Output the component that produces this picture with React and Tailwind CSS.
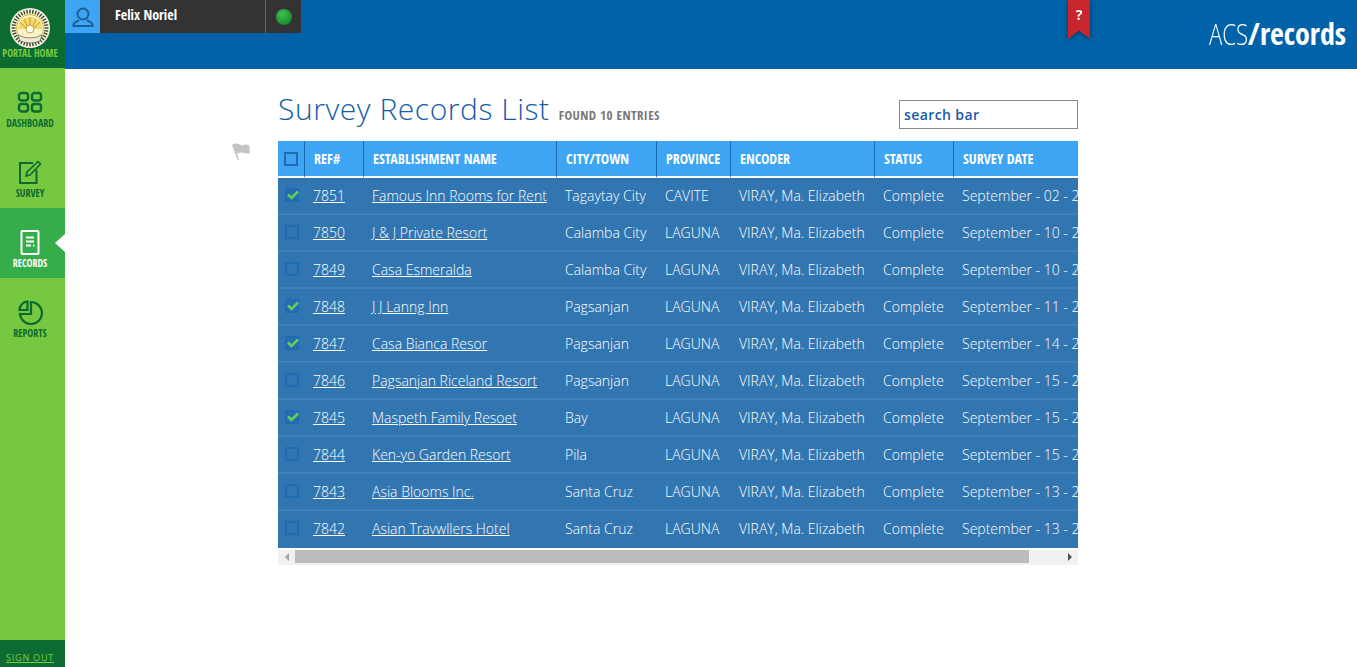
const rows = [
  ["7851", "Famous Inn Rooms for Rent", "Tagaytay City", "CAVITE", "September - 02 - 2015", true],
  ["7850", "J & J Private Resort", "Calamba City", "LAGUNA", "September - 10 - 2015", false],
  ["7849", "Casa Esmeralda", "Calamba City", "LAGUNA", "September - 10 - 2015", false],
  ["7848", "J J Lanng Inn", "Pagsanjan", "LAGUNA", "September - 11 - 2015", true],
  ["7847", "Casa Bianca Resor", "Pagsanjan", "LAGUNA", "September - 14 - 2015", true],
  ["7846", "Pagsanjan Riceland Resort", "Pagsanjan", "LAGUNA", "September - 15 - 2015", false],
  ["7845", "Maspeth Family Resoet", "Bay", "LAGUNA", "September - 15 - 2015", true],
  ["7844", "Ken-yo Garden Resort", "Pila", "LAGUNA", "September - 15 - 2015", false],
  ["7843", "Asia Blooms Inc.", "Santa Cruz", "LAGUNA", "September - 13 - 2015", false],
  ["7842", "Asian Travwllers Hotel", "Santa Cruz", "LAGUNA", "September - 13 - 2015", false],
];

const narrow = "font-['Open_Sans_Condensed','Liberation_Sans_Narrow','Liberation_Sans',sans-serif]";

function Seal() {
  const ticks = Array.from({ length: 36 }, (_, i) => i * 10);
  return (
    <svg width="40" height="40" viewBox="0 0 40 40">
      <circle cx="20" cy="20" r="20" fill="#f6f3dc" />
      {ticks.map((a) => (
        <line key={a} x1="20" y1="1.5" x2="20" y2="5.5" stroke="#2f3a1e" strokeWidth="1.3" transform={`rotate(${a} 20 20)`} />
      ))}
      <circle cx="20" cy="20" r="13.5" fill="#fbf4c8" stroke="#d9b640" strokeWidth="1" />
      <path d="M8 21 A12 12 0 0 1 32 21 Z" fill="#f4d96b" />
      <path d="M20 24 L10 14 M20 24 L14 11 M20 24 L20 9 M20 24 L26 11 M20 24 L30 14" stroke="#c99b2a" strokeWidth="1" />
      <circle cx="20" cy="21" r="4" fill="#fffbe8" stroke="#b98f2c" strokeWidth="0.8" />
      <path d="M8 27 Q20 33 32 27 L30 33 Q20 37 10 33 Z" fill="#efe9cf" stroke="#444" strokeWidth="0.6" />
    </svg>
  );
}

function NavItem({ label, active, children }) {
  return (
    <div className={`relative h-[70px] flex flex-col items-center pt-[21px] pr-[5px] ${active ? "bg-[#35ad4b] text-white" : "text-[#0a6a30]"}`}>
      <div className="h-[27px] flex items-center justify-center">{children}</div>
      <div className={`${narrow} mt-[1px] text-[10px] leading-[12px] font-bold`}>{label}</div>
      {active && (
        <div className="absolute right-0 top-[26px] w-0 h-0 border-y-[9px] border-y-transparent border-r-[10px] border-r-white" />
      )}
    </div>
  );
}

function Box({ checked }) {
  return (
    <div className={`relative w-[14px] h-[14px] border-2 border-[#1f6cb5] ${checked ? "bg-[#2a6cb0]" : ""}`}>
      {checked && (
        <svg className="absolute -left-[1px] -top-[2px]" width="14" height="14" viewBox="0 0 14 14">
          <path d="M2 6.500 L5.500 10 L12 3.500" fill="none" stroke="#5fcf5a" strokeWidth="2.600" />
        </svg>
      )}
    </div>
  );
}

const heads = [
  ["REF#", "w-[59px]"],
  ["ESTABLISHMENT NAME", "w-[193px]"],
  ["CITY/TOWN", "w-[100px]"],
  ["PROVINCE", "w-[74px]"],
  ["ENCODER", "w-[144px]"],
  ["STATUS", "w-[79px]"],
  ["SURVEY DATE", "w-[160px]"],
];

export default function App() {
  return (
    <div className="flex w-[1357px] h-[667px] overflow-hidden bg-white font-['Open_Sans',sans-serif]">
      <aside className="w-[65px] shrink-0 flex flex-col bg-[#76c840]">
        <div className="h-[68px] bg-[#0b6b31] flex flex-col items-center pt-[8px] pr-[5px]">
          <Seal />
          <div className={`${narrow} -mt-[1px] text-[10px] leading-[12px] font-bold text-[#7ccb45] whitespace-nowrap`}>PORTAL HOME</div>
        </div>
        <NavItem label="DASHBOARD">
          <svg width="26" height="23" viewBox="0 0 26 23" fill="none" stroke="#0a6a30" strokeWidth="2.4">
            <rect x="2" y="2" width="9" height="7.5" rx="2.5" />
            <rect x="15" y="2" width="9" height="7.5" rx="2.5" />
            <rect x="2" y="13" width="9" height="7.5" rx="2.5" />
            <rect x="15" y="13" width="9" height="7.5" rx="2.5" />
          </svg>
        </NavItem>
        <NavItem label="SURVEY">
          <svg width="24" height="25" viewBox="0 0 24 25" fill="none" stroke="#0a6a30" strokeWidth="2">
            <path d="M15 3 H2 V23 H18.500 V10" />
            <path d="M8 16 L9 12 L20 1.500 L22.500 4 L12 15 Z" strokeWidth="1.600" />
          </svg>
        </NavItem>
        <NavItem label="RECORDS" active>
          <svg width="20" height="25" viewBox="0 0 20 25" fill="none" stroke="#fff" strokeWidth="2">
            <rect x="1.500" y="1" width="17" height="23" rx="1" />
            <path d="M6 7.500 H14 M6 11.500 H14 M6 15.500 H11 M13 15.500 H14.500" />
          </svg>
        </NavItem>
        <NavItem label="REPORTS">
          <svg width="25" height="25" viewBox="0 0 25 25" fill="none" stroke="#0a6a30" strokeWidth="2.200">
            <path d="M13 2 A11 11 0 1 1 2 14 H13 Z" />
            <path d="M9.500 1.500 A8.500 8.500 0 0 0 1.500 10 H9.500 Z" />
          </svg>
        </NavItem>
        <div className="mt-auto h-[27px] bg-[#0b6b31] flex items-center justify-center pt-[8px] pr-[5px]">
          <span className="text-[9px] leading-[12px] tracking-[0.8px] text-[#7ccb45] underline whitespace-nowrap">SIGN OUT</span>
        </div>
      </aside>

      <div className="flex-1 min-w-0 flex flex-col">
        <header className="relative h-[69px] shrink-0 bg-[#0062a8] flex justify-between">
          <div className="flex h-[33px]">
            <div className="w-[35px] bg-[#3da5f4] flex items-center justify-center">
              <svg width="22" height="20" viewBox="0 0 22 20" fill="none" stroke="#1d5c96" strokeWidth="2">
                <circle cx="11" cy="7" r="5.500" />
                <path d="M7 13 C5 15 1.500 15 1.500 18 V19 H20.500 V18 C20.500 15 17 15 15 13" />
              </svg>
            </div>
            <div className={`w-[165px] bg-[#333333] pl-[15px] pb-[4px] flex items-center text-white text-[14px] font-bold ${narrow}`}>Felix Noriel</div>
            <div className="w-[36px] bg-[#333333] border-l border-[#666] flex items-center justify-center">
              <div className="w-[16px] h-[16px] rounded-full bg-[radial-gradient(circle_at_40%_35%,#3fc04f,#0a7a22)]" />
            </div>
          </div>
          <div className="flex items-start pr-[11px]">
            <div className="mr-[119px] drop-shadow-[0_1px_2px_rgba(0,0,0,0.5)]">
              <div className="w-[22px] h-[39px] bg-[#c8262c] flex justify-center pt-[7px] [clip-path:polygon(0_0,100%_0,100%_100%,50%_78%,0_100%)]">
                <span className="text-white text-[14px] leading-[16px] font-bold">?</span>
              </div>
            </div>
            <div className="w-[137px] flex items-baseline justify-between pt-[15px] text-white leading-[38px]">
              <span className="inline-block w-[37px] origin-left scale-x-[0.74] font-light text-[30px] whitespace-nowrap">ACS</span>
              <span className={`${narrow} font-bold text-[30px] whitespace-nowrap`}>/records</span>
            </div>
          </div>
        </header>

        <main className="relative flex-1 pl-[213px]">
          <svg className="absolute left-[165px] top-[72px]" width="22" height="22" viewBox="0 0 22 22" fill="#c4c4c4">
            <path d="M2 4 L3.500 3 C8 1 11 6 15 3.500 L19 4 L20 12 C16 14 12 9 7 13 L9 19 L7.800 19.800 Z" />
          </svg>
          <div className="w-[800px]">
            <div className="h-[72px] flex items-center justify-between pt-[7px]">
              <div className="flex items-baseline">
                <h1 className="text-[30px] leading-[40px] font-light text-[#165ca8] tracking-[0.55px]">Survey Records List</h1>
                <span className={`${narrow} ml-[9px] text-[13px] font-bold text-[#777] tracking-[0.4px]`}>FOUND 10 ENTRIES</span>
              </div>
              <div className="w-[179px] h-[29px] border border-[#888] px-[4px] flex items-center text-[14px] font-semibold text-[#165ca8] tracking-[0.4px] mt-[11px]">search bar</div>
            </div>
            <div className="overflow-hidden">
              <table className="table-fixed border-separate border-spacing-0 w-[836px] text-white">
                <thead>
                  <tr className="bg-[#3da5f4]">
                    <th className="w-[27px] h-[37px] border-r border-b-2 border-r-[#1a6cb0] border-b-white p-0 align-middle">
                      <div className="flex justify-center"><Box /></div>
                    </th>
                    {heads.map(([h, w], i) => (
                      <th key={h} className={`${w} ${narrow} h-[37px] border-b-2 border-b-white ${i < 6 ? "border-r border-r-[#1a6cb0]" : ""} p-0 pl-[9px] text-left text-[14px] font-bold whitespace-nowrap`}>{h}</th>
                    ))}
                  </tr>
                </thead>
                <tbody className="text-[14px] font-light">
                  {rows.map((r) => (
                    <tr key={r[0]} className="bg-[#3276b1] [&>td]:h-[37px] [&>td]:border-b-2 [&>td]:border-b-[#4080bb] last:[&>td]:border-b-transparent">
                      <td className="p-0 align-middle"><div className="flex justify-center -mt-[2px]"><Box checked={r[5]} /></div></td>
                      <td className="p-0 pl-[8px]"><span className="underline">{r[0]}</span></td>
                      <td className="p-0 pl-[8px] whitespace-nowrap"><span className="underline">{r[1]}</span></td>
                      <td className="p-0 pl-[8px] whitespace-nowrap">{r[2]}</td>
                      <td className="p-0 pl-[8px]">{r[3]}</td>
                      <td className="p-0 pl-[8px] whitespace-nowrap">VIRAY, Ma. Elizabeth</td>
                      <td className="p-0 pl-[8px]">Complete</td>
                      <td className="p-0 pl-[8px] whitespace-nowrap">{r[4]}</td>
                    </tr>
                  ))}
                </tbody>
              </table>
              <div className="mt-[2px] h-[15px] bg-[#f1f1f1] flex items-start">
                <div className="w-[17px] h-[13px] flex items-center justify-center">
                  <div className="w-0 h-0 border-y-[4px] border-y-transparent border-r-[4px] border-r-[#a3a3a3]" />
                </div>
                <div className="w-[734px] h-[13px] bg-[#bcbcbc]" />
                <div className="flex-1 h-[13px] flex items-center justify-end pr-[6px]">
                  <div className="w-0 h-0 border-y-[4px] border-y-transparent border-l-[4px] border-l-[#505050]" />
                </div>
              </div>
            </div>
          </div>
        </main>
      </div>
    </div>
  );
}
